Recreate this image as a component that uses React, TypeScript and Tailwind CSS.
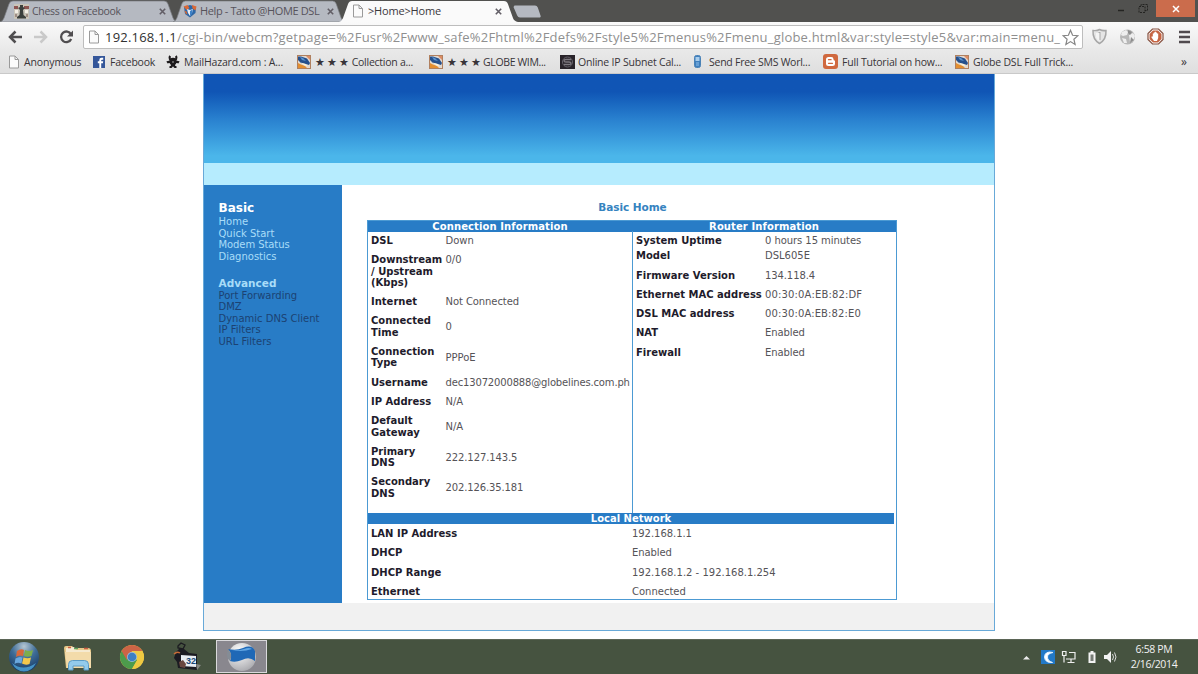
import type { ReactNode } from "react";

type Row = { label: string[]; value: string; top?: boolean; short?: boolean; valueClass?: string };

const connectionRows: Row[] = [
  { label: ["DSL"], value: "Down" },
  { label: ["Downstream", "/ Upstream", "(Kbps)"], value: "0/0", top: true },
  { label: ["Internet"], value: "Not Connected", valueClass: "tracking-[-0.08px]" },
  { label: ["Connected", "Time"], value: "0" },
  { label: ["Connection", "Type"], value: "PPPoE" },
  { label: ["Username"], value: "dec13072000888@globelines.com.ph", valueClass: "tracking-[-0.16px]" },
  { label: ["IP Address"], value: "N/A" },
  { label: ["Default", "Gateway"], value: "N/A" },
  { label: ["Primary", "DNS"], value: "222.127.143.5", valueClass: "tracking-[-0.1px]" },
  { label: ["Secondary", "DNS"], value: "202.126.35.181", valueClass: "tracking-[-0.12px]" },
];

const routerRows: Row[] = [
  { label: ["System Uptime"], value: "0 hours 15 minutes", short: true, valueClass: "tracking-[-0.06px]" },
  { label: ["Model"], value: "DSL605E" },
  { label: ["Firmware Version"], value: "134.118.4", valueClass: "tracking-[-0.1px]" },
  { label: ["Ethernet MAC address"], value: "00:30:0A:EB:82:DF", valueClass: "tracking-[0.15px]" },
  { label: ["DSL MAC address"], value: "00:30:0A:EB:82:E0", valueClass: "tracking-[0.12px]" },
  { label: ["NAT"], value: "Enabled", valueClass: "tracking-[-0.1px]" },
  { label: ["Firewall"], value: "Enabled", valueClass: "tracking-[-0.1px]" },
];

const localRows: Row[] = [
  { label: ["LAN IP Address"], value: "192.168.1.1", valueClass: "tracking-[-0.05px]" },
  { label: ["DHCP"], value: "Enabled", valueClass: "tracking-[-0.1px]" },
  { label: ["DHCP Range"], value: "192.168.1.2 - 192.168.1.254" },
  { label: ["Ethernet"], value: "Connected" },
];

function PageIcon() {
  return (
    <svg width="12" height="14" viewBox="0 0 12 14" className="shrink-0">
      <path d="M1.500 1h5.500L10.500 4.600V13H1.500z" fill="#fbfbfb" stroke="#9a9a9a" />
      <path d="M7 1v3.500h3.500" fill="none" stroke="#9a9a9a" />
    </svg>
  );
}

function ChessIcon() {
  return (
    <svg width="15" height="15" viewBox="0 0 15 15" className="shrink-0">
      <rect width="15" height="15" fill="#c9c4b8" />
      <path d="M0 2h4v3H0zM10 2h5v3h-5z" fill="#8e5550" />
      <path d="M1 6h3v3H1zM11 6h3v3h-3z" fill="#f4efe6" />
      <path d="M6 1h3v2l2 1-2 2 .5 5 2.500 2v1.500H3V13l2.500-2L6 6 4 4l2-1z" fill="#3b3f3c" />
      <path d="M1 10h2v3H1zM12 10h2v3h-2z" fill="#a08e84" />
    </svg>
  );
}

function HelpIcon() {
  return (
    <svg width="14" height="14" viewBox="0 0 14 14" className="shrink-0">
      <path d="M1 3l6-2 6 2-.5 6L7 13.500 2 10z" fill="#2c67a7" />
      <path d="M.5 2.500L4.500 1l2 3-3 2zM9 1l4.500 1.500-1 4-3-2z" fill="#dc6936" />
      <path d="M4 5l3 1 3-1-1 4-2 3-2-3z" fill="#e9eef5" />
      <path d="M7 7l2.500-1.500-.5 4L7 12z" fill="#3b80c7" />
      <path d="M1.500 6.500l2 1 1 3-2-1z" fill="#d8662f" />
    </svg>
  );
}

function FacebookIcon() {
  return (
    <svg width="12" height="12" viewBox="0 0 12 12" className="shrink-0">
      <rect width="12" height="12" fill="#35579a" />
      <path d="M6.300 12V7.200H4.800V5.300h1.500V4q0-2.200 2.300-2.200h1.600v1.900H9q-.8 0-.8.8v.8h2l-.3 1.900H8.200V12z" fill="#fff" />
    </svg>
  );
}

function BiohazardIcon() {
  return (
    <svg width="14" height="13" viewBox="0 0 14 13" className="shrink-0" fill="none" stroke="#1d1a1c" strokeWidth="2.200">
      <path d="M4.200 1C2.500 3 4 5.600 7 5.600S11.500 3 9.800 1" />
      <path d="M1 7.500c2-1.500 5-.4 5.200 2 .1 1.700-1 2.800-2.700 2.700" />
      <path d="M13 7.500c-2-1.500-5-.4-5.200 2-.1 1.700 1 2.800 2.700 2.700" />
      <circle cx="7" cy="6.500" r="2.600" fill="#1d1a1c" />
      <circle cx="7" cy="7" r=".7" fill="#ddd" stroke="none" />
    </svg>
  );
}

function TrickIcon() {
  return (
    <svg width="14" height="14" viewBox="0 0 14 14" className="shrink-0">
      <rect x=".5" y=".5" width="13" height="13" fill="#e3d9ce" stroke="#b0805f" />
      <path d="M1 1.500h3l6 2 3 4.500-1 2-3-1-5-1-3-3z" fill="#26508c" />
      <path d="M3 2l3 1 3 3-4-1z" fill="#5b93cf" />
      <path d="M1 8l3 1.500L8 11l2 2H1z" fill="#e48f30" />
      <path d="M3.500 7.500l5 1.500 2 2-3-.5z" fill="#fff4d8" />
      <path d="M9 1h4v4l-2-2z" fill="#dc8c65" />
    </svg>
  );
}

function SubnetIcon() {
  return (
    <svg width="15" height="14" viewBox="0 0 15 14" className="shrink-0">
      <rect width="15" height="14" fill="#282329" />
      <circle cx="7.500" cy="7" r="5" fill="none" stroke="#66626a" />
      <path d="M11 4.500H6q-2 0-2 1.200T6 7h3q2 0 2 1.200T9 9.500H4" fill="none" stroke="#7d797f" strokeWidth="1.300" />
    </svg>
  );
}

function PhoneIcon() {
  return (
    <svg width="7" height="13" viewBox="0 0 7 13" className="shrink-0">
      <rect x=".5" y=".5" width="6" height="12" rx="2" fill="#3f7fbd" stroke="#4a82b6" />
      <rect x="1.500" y="2" width="4" height="4" fill="#a9cdec" />
      <path d="M2 8h3M2 10h3" stroke="#8fc0ea" />
    </svg>
  );
}

function BloggerIcon() {
  return (
    <svg width="15" height="15" viewBox="0 0 15 15" className="shrink-0">
      <rect width="15" height="15" rx="3" fill="#d0693f" />
      <path d="M5.500 3h2.700q2.300 0 2.300 2.300 0 1.200 1 1.200.5 0 .5.700v2.300Q12 12 9.500 12h-4Q3 12 3 9.500v-4Q3 3 5.500 3z" fill="#fff" />
      <path d="M5.500 5.700h2.600M5.500 9.300h4" stroke="#d0693f" strokeWidth="1.300" strokeLinecap="round" />
    </svg>
  );
}

function CloseX({ className = "" }: { className?: string }) {
  return (
    <svg width="7" height="7" viewBox="0 0 7 7" className={className}>
      <path d="M.8.8l5.400 5.400M6.200.8L.8 6.200" stroke="#625e66" strokeWidth="1.600" />
    </svg>
  );
}

function Tab({ active, icon, title, className, titleClass }: { active?: boolean; icon: ReactNode; title: string; className: string; titleClass: string }) {
  return (
    <div className={`relative flex h-[22px] items-center ${className}`}>
      <svg className="absolute inset-0 h-full w-full" viewBox="0 0 178 22" preserveAspectRatio="none">
        <path
          d="M0 22Q3 21 4 18L9 4Q10 1 13 1H164Q167 1 168 4L173 18Q174 21 178 22z"
          fill={active ? "#fafafa" : "#b5b9c1"}
          stroke={active ? "none" : "#7d8085"}
          strokeWidth=".7"
        />
      </svg>
      <div className="relative flex w-full items-center">
        {icon}
        <span className={`whitespace-nowrap leading-[14px] ${titleClass}`}>{title}</span>
        <CloseX className="ml-auto" />
      </div>
    </div>
  );
}

function TabStrip() {
  return (
    <div className="flex h-[22px] bg-[#51514f]">
      <Tab icon={<ChessIcon />} title="Chess on Facebook" className="w-[178px] pl-[14px] pr-[12px]" titleClass="ml-[3px] text-[10.5px] tracking-[-0.3px] text-[#57535b]" />
      <Tab icon={<HelpIcon />} title="Help - Tatto @HOME DSL" className="-ml-[5px] w-[173px] pl-[10px] pr-[12px]" titleClass="ml-[3px] text-[11px] tracking-[-0.38px] text-[#57535b]" />
      <Tab active icon={<PageIcon />} title=">Home>Home" className="z-10 -ml-[7px] w-[179px] pl-[13px] pr-[16px]" titleClass="ml-1 text-[11px] tracking-[-0.18px] text-[#3b383d]" />
      <svg width="30" height="22" viewBox="0 0 30 22" className="-ml-[5px]">
        <path d="M1.500 5.500H22q2 0 2.800 2l2.700 8q.8 2-1.500 2H7q-2 0-2.800-2L.5 7z" fill="#b5b9c1" />
      </svg>
      <div className="ml-auto flex h-[17px]">
        <svg width="42" height="17" viewBox="0 0 42 17" fill="none" stroke="#242422" strokeWidth="1">
          <path d="M4 10.500h6" strokeWidth="1.500" />
          <path d="M25 6.500h6v6h-6zM27 6V4.500h6.500v6H31" strokeDasharray="2 1" />
        </svg>
        <div className="flex w-[39px] items-center justify-center bg-[#cb6c4c]">
          <svg width="8" height="8" viewBox="0 0 8 8">
            <path d="M1 1l6 6M7 1L1 7" stroke="#fff" strokeWidth="1.500" />
          </svg>
        </div>
        <div className="w-[3px]" />
      </div>
    </div>
  );
}

function Toolbar() {
  return (
    <div className="flex h-7 items-center bg-linear-to-b from-[#fafafa] to-[#e9e9e9]">
      <svg width="83" height="28" viewBox="0 0 83 28" fill="none" className="shrink-0">
        <path d="M22 15H10.500M15.500 9.500L10 15l5.500 5.500" stroke="#504e50" strokeWidth="2.500" />
        <path d="M34 15h11.500M40.500 9.500L46 15l-5.500 5.500" stroke="#c9c9c9" strokeWidth="2.500" />
        <path d="M71 12.200A5.300 5.300 0 1 0 71.200 17" stroke="#504e50" strokeWidth="2.300" />
        <path d="M73 8.500v6h-6z" fill="#504e50" />
      </svg>
      <div className="mt-0.5 flex h-6 w-[1000px] items-center rounded-[2px] border border-[#bdbdbd] bg-white pl-[4px]">
        <PageIcon />
        <span className="ml-[5px] w-[957px] overflow-hidden whitespace-nowrap text-[13px] leading-5 tracking-[0.2px] text-[#8f8f8f]">
          <span className="text-[#303030]">192.168.1.1</span>
          /cgi-bin/webcm?getpage=%2Fusr%2Fwww_safe%2Fhtml%2Fdefs%2Fstyle5%2Fmenus%2Fmenu_globe.html&var:style=style5&var:main=menu_
        </span>
        <svg width="17" height="17" viewBox="0 0 17 17" className="shrink-0">
          <path d="M8.500 1.300l2.100 5 5.300.4-4 3.500 1.200 5.200-4.600-2.800-4.600 2.800 1.200-5.200-4-3.500 5.300-.4z" fill="#fff" stroke="#858585" strokeWidth="1.200" />
        </svg>
      </div>
      <svg width="115" height="28" viewBox="0 0 115 28" className="shrink-0">
        <path d="M10 8.500q4 .5 6.500-1 3 1.500 6.500 1 .5 9-6.500 13-7-4-6.500-13z" fill="#e5e5e5" stroke="#a6a6a6" strokeWidth="1.500" />
        <path d="M16.500 10v8" stroke="#a9a9a9" strokeWidth="2" fill="none" />
        <path d="M13 11v4q1 3 3.500 4.500V11z" fill="#f4f4f4" />
        <circle cx="44.500" cy="15" r="7.500" fill="#b7b7b7" />
        <path d="M39 10l4-2 2 2-1 3-4 1-2-1zM46 13l4-2 2 3-2 5-3 1zM39 16l4 1 1 4-3 0z" fill="#eeeeee" />
        <path d="M45 8l4 2-2 3-2-2zM48 15l3 3-4 3z" fill="#8e8e8e" />
        <path d="M69.500 7h6l4.500 4.500v6L75.500 22h-6L65 17.500v-6z" fill="#fff" stroke="#86503f" strokeWidth="1.200" />
        <path d="M70 8.500h5l3.500 3.500v5L75 20.500h-5L66.500 17v-5z" fill="#c66543" />
        <path d="M69.800 11.500h1v-1h1v-.7h1.200v.7h1v1h1.200V16l-1.200 3h-3L68.500 15.500v-1h1.300z" fill="#fff" />
        <path d="M96 10h11M96 15h11M96 20h11" stroke="#504a4e" strokeWidth="2.500" />
      </svg>
    </div>
  );
}

function Bookmark({ icon, title, className, titleClass }: { icon: ReactNode; title: string; className: string; titleClass?: string }) {
  return (
    <div className={`flex shrink-0 items-center whitespace-nowrap ${className}`}>
      {icon}
      <span className={titleClass}>{title}</span>
    </div>
  );
}

function BookmarksBar() {
  return (
    <div className="flex h-6 border-b border-[#c9c9c9] bg-linear-to-b from-[#e9e9e9] to-[#dfdfdf] pl-2 text-[10.5px] leading-[22px] text-[#383438]">
      <Bookmark icon={<PageIcon />} title="Anonymous" className="w-[85px]" titleClass="ml-[4px] tracking-[-0.12px]" />
      <Bookmark icon={<FacebookIcon />} title="Facebook" className="w-[73px]" titleClass="ml-[5px] tracking-[-0.2px]" />
      <Bookmark icon={<BiohazardIcon />} title="MailHazard.com : A..." className="w-[131px]" titleClass="ml-[4px] tracking-[-0.17px]" />
      <Bookmark icon={<TrickIcon />} title="★ ★ ★ Collection a..." className="w-[132px]" titleClass="ml-[4px] tracking-[-0.25px]" />
      <Bookmark icon={<TrickIcon />} title="★ ★ ★ GLOBE WIM..." className="w-[131px]" titleClass="ml-[4px] tracking-[-0.36px]" />
      <Bookmark icon={<SubnetIcon />} title="Online IP Subnet Cal..." className="w-[134px]" titleClass="ml-[3px] tracking-[-0.2px]" />
      <Bookmark icon={<PhoneIcon />} title="Send Free SMS Worl..." className="w-[129px]" titleClass="ml-[8px] tracking-[-0.25px]" />
      <Bookmark icon={<BloggerIcon />} title="Full Tutorial on how..." className="w-[132px]" titleClass="ml-[4px] tracking-[-0.2px]" />
      <Bookmark icon={<TrickIcon />} title="Globe DSL Full Trick..." className="w-[140px]" titleClass="ml-[4px] tracking-[-0.2px]" />
      <span className="ml-auto mr-[11px] text-[12px] leading-[23px]">»</span>
    </div>
  );
}

function SideNav() {
  return (
    <nav className="h-[418px] w-[138px] bg-[#287cc6] pl-[14.5px] pt-[16px] text-[10px] leading-[11.5px] text-[#a9dcf8]">
      <h2 className="mb-[1px] text-[12px] font-bold leading-[14px] text-white">Basic</h2>
      <ul>
        <li>Home</li>
        <li>Quick Start</li>
        <li className="tracking-[-0.08px]">Modem Status</li>
        <li>Diagnostics</li>
      </ul>
      <h2 className="mt-[16px] text-[10.500px] font-bold leading-[11.5px]">Advanced</h2>
      <ul className="text-[#1c4272]">
        <li>Port Forwarding</li>
        <li>DMZ</li>
        <li>Dynamic DNS Client</li>
        <li>IP Filters</li>
        <li>URL Filters</li>
      </ul>
    </nav>
  );
}

function InfoRows({ rows, labelClass }: { rows: Row[]; labelClass: string }) {
  return (
    <div className="text-[10px] leading-[11.3px] whitespace-nowrap">
      {rows.map((row) => (
        <div key={row.label.join(" ")} className={`flex pt-[4px] ${row.short ? "" : "pb-[4px]"} ${row.top ? "items-start" : "items-center"}`}>
          <div className={`shrink-0 font-bold text-[#1e1b2b] ${labelClass}`}>
            {row.label.map((line) => (
              <div key={line}>{line}</div>
            ))}
          </div>
          <div className={`text-[#555357] ${row.valueClass ?? ""}`}>{row.value}</div>
        </div>
      ))}
    </div>
  );
}

function RouterPage() {
  return (
    <main className="h-[565px] bg-white pl-[203px] font-['DejaVu_Sans',Verdana,sans-serif]">
      <div className="h-[557px] w-[792px] border-x border-b border-[#68a9d8]">
        <div className="h-[89px] bg-linear-to-b from-[#1055b5] from-20% via-[#2a82d0] via-52% to-[#4bb6ea] to-92%" />
        <div className="h-[22px] bg-[#b6ecfe]" />
        <div className="flex h-[418px]">
          <SideNav />
          <section className="pl-[25px] pt-[16px]">
            <h1 className="w-[531px] text-center text-[10.500px] font-bold leading-[12px] tracking-[-0.05px] text-[#3583bf]">Basic Home</h1>
            <div className="mt-[7px] h-[380px] w-[530px] border border-[#4c9ad3]">
              <div className="flex h-[11px] bg-[#287cc6] text-center text-[10px] font-bold leading-[11px] text-white">
                <div className="w-[265px] tracking-[0.1px]">Connection Information</div>
                <div className="w-[265px] tracking-[0.1px]">Router Information</div>
              </div>
              <div className="flex h-[281px]">
                <div className="-mt-px w-[265px] border-r border-[#4c9ad3] pl-[3px]">
                  <InfoRows rows={connectionRows} labelClass="w-[74.500px]" />
                </div>
                <div className="-mt-px pl-[3px]">
                  <InfoRows rows={routerRows} labelClass="w-[129px]" />
                </div>
              </div>
              <div className="h-[11px] w-[526px] bg-[#287cc6] text-center text-[10px] font-bold leading-[12px] text-white">Local Network</div>
              <div className="pl-[3px]">
                <InfoRows rows={localRows} labelClass="w-[261px]" />
              </div>
            </div>
          </section>
        </div>
        <div className="h-[27px] bg-[#f1f1f1]" />
      </div>
    </main>
  );
}

function Taskbar() {
  return (
    <footer className="flex h-[35px] items-center border-t border-[#5b6556] bg-[#465340]">
      <svg width="270" height="34" viewBox="0 0 270 34">
        <defs>
          <radialGradient id="orb" cx=".5" cy=".15" r=".9">
            <stop offset="0" stopColor="#b5c6d2" />
            <stop offset=".45" stopColor="#3f6d97" />
            <stop offset="1" stopColor="#12335e" />
          </radialGradient>
          <radialGradient id="ball" cx=".4" cy=".3" r=".8">
            <stop offset="0" stopColor="#ffffff" />
            <stop offset="1" stopColor="#a3a3a8" />
          </radialGradient>
        </defs>
        <circle cx="24" cy="17" r="15" fill="url(#orb)" />
        <path d="M12 23q11 9 24 0-4 8.500-12 8.500T12 23z" fill="#4fa8dc" opacity=".8" />
        <path d="M17 11q4-3 7-1l-1 6q-4-1.500-7 1z" fill="#d9683a" />
        <path d="M25 10q4 2 8 0l-1.500 6q-4 1.500-7.500 0z" fill="#7eae4b" />
        <path d="M15.500 18.500q4-2.500 7-1l-1 6q-4-1.500-7 .5z" fill="#6aa8df" />
        <path d="M23.500 17.500q4 1.500 7.500 0l-1.500 6.500q-4 1.500-7.500-.5z" fill="#f4c84c" />

        <path d="M64 8q0-2 2-2h6l2 2h14q3 0 3 3v17H66z" fill="#e7c888" />
        <path d="M66 8l8-1 2 3h14v4H66z" fill="#f6ead0" />
        <path d="M68 7.500h3M84 8.500h4" stroke="#cc5d42" strokeWidth="1.500" />
        <path d="M74 8.500h4" stroke="#5fa35e" strokeWidth="1.500" />
        <path d="M65 12h26v16H67z" fill="#f3dbaa" />
        <path d="M68.500 30v-5.500q0-4 4-4h12q4 0 4 4V30h-4.500v-4H73v4z" fill="#93cbec" stroke="#5b9bc5" />

        <circle cx="132" cy="17" r="12" fill="#efc942" />
        <path d="M121.600 11A12 12 0 0 0 132 29l5.200-9-5.200-3z" fill="#4d9b4c" />
        <path d="M121.600 11A12 12 0 0 1 142.400 11H132l-5.200 9z" fill="#cc6446" />
        <path d="M142.400 11A12 12 0 0 1 132 29l5.200-9L136 11z" fill="#efc942" />
        <circle cx="132" cy="17" r="5" fill="#9fbfdc" />
        <circle cx="132" cy="17" r="4.300" fill="#3e7fc3" />

        <path d="M178 6l3-3 4 2-2 4-5-1z" fill="none" stroke="#1b1b20" strokeWidth="1.300" />
        <path d="M176 12l3-3h5l5 4 8 1v16l-19-2-1-6-3-4z" fill="#1b1b22" />
        <path d="M181 15l15 1v11l-15-1z" fill="#e8edf3" />
        <path d="M174 14q3-3 6-1" stroke="#c76c37" strokeWidth="1.500" fill="none" />
        <path d="M179 22l4-2 3 4-1 4-5-1z" fill="#6a4740" />
        <path d="M196 24l5 1-4 5z" fill="#858781" />
        <text x="186" y="24" className="fill-[#194774] font-['Liberation_Sans',sans-serif] text-[9px] font-bold">32</text>

        <rect x="216.500" y=".5" width="50" height="32" fill="#89878e" stroke="#dad9dc" />
        <circle cx="242" cy="17" r="14" fill="url(#ball)" />
        <path d="M228 9q8 2 15-1 9-4 12 3v10q-6-5-13-1-7 3-12 1 3-6-2-12z" fill="#1f68b6" />
        <path d="M232 10.500q6 .5 12-1.500 5-2 8 0-8 3-20 1.500z" fill="#63a8e6" />
        <path d="M228 9q5 5 2 12l-2-2q-2-4 0-10z" fill="#858c95" />
      </svg>
      <svg width="100" height="34" viewBox="0 0 100 34" className="ml-auto">
        <path d="M2 19.500h7L5.500 16z" fill="#ececec" />
        <rect x="20" y="10" width="14" height="14" fill="#2279c8" />
        <path d="M32 12.500q-8-2-8.500 4.500.5 6 8 5.500-5-1.500-5-5.500 0-3.500 5.500-4.500z" fill="#fff" stroke="#dff0ff" />
        <g fill="none" stroke="#eeeeee" strokeWidth="1.200">
          <path d="M48 12.500h6v6.500h-9M50 19v3.500M46.500 22.500h7" />
          <path d="M41.500 11.500h3.500v4h-3.500zM43 15.500v7" />
        </g>
        <path d="M69.500 11h3v1.500h2V23h-7V12.500h2z" fill="#f3f3f3" />
        <rect x="69.500" y="14.500" width="3" height="6.500" fill="#777c76" />
        <path d="M83 15h3l4-4v12l-4-4h-3z" fill="#f2f2f2" />
        <path d="M91.500 14q2 3 0 6M93.500 12.500q3 4.500 0 9" fill="none" stroke="#dadada" strokeWidth="1" />
      </svg>
      <div className="ml-[6px] mr-[17px] w-[54px] text-center text-[10.500px] leading-[15px] tracking-[-0.35px] whitespace-nowrap text-[#f2f2f2]">
        <div>6:58 PM</div>
        <div>2/16/2014</div>
      </div>
    </footer>
  );
}

export default function App() {
  return (
    <div className="h-[674px] w-[1198px] overflow-hidden bg-white font-['Open_Sans','Noto_Sans',sans-serif]">
      <TabStrip />
      <Toolbar />
      <BookmarksBar />
      <RouterPage />
      <Taskbar />
    </div>
  );
}
